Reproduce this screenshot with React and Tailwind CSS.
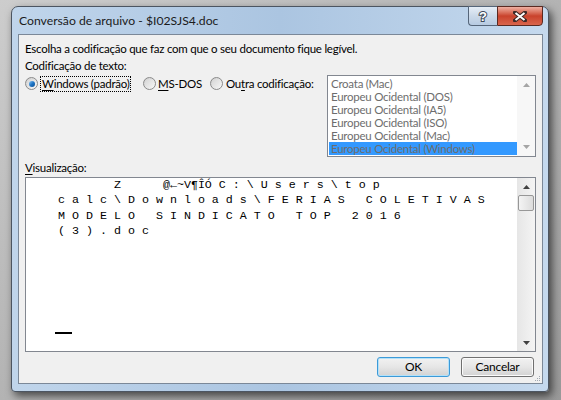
import React from 'react'

const ui = "[font-family:Lato,'Noto_Sans',sans-serif]"

function Radio({ on }) {
  return (
    <span className="flex h-[13px] w-[13px] shrink-0 items-center justify-center rounded-full border border-[#8a8a8a] bg-gradient-to-br from-[#cdcdcd] to-[#fbfbfb]">
      <span className="flex h-[9px] w-[9px] items-center justify-center rounded-full bg-gradient-to-br from-[#d6d6d6] to-[#f4f4f4]">
        {on ? (
          <span className="h-[6px] w-[6px] rounded-full bg-gradient-to-br from-[#7fc3f4] via-[#1d74c4] to-[#0d4f94]" />
        ) : null}
      </span>
    </span>
  )
}

function Arrow({ up, color }) {
  return (
    <svg width="7" height="4" viewBox="0 0 7 4">
      {up ? <path d="M3.5 0 L7 4 L0 4 Z" fill={color} /> : <path d="M0 0 L7 0 L3.5 4 Z" fill={color} />}
    </svg>
  )
}

function Button({ children, focus }) {
  return (
    <button
      className={
        'flex h-[20px] w-[73px] items-center justify-center rounded-[3px] border bg-gradient-to-b from-[#f2f2f2] via-[#e6e6e6] to-[#d2d2d2] text-[12px] leading-none text-black ' +
        (focus ? 'border-[#3c9ad8] shadow-[inset_0_0_0_1px_#b3e1f9]' : 'border-[#707070] shadow-[inset_0_0_0_1px_#fbfbfb]')
      }
    >
      {children}
    </button>
  )
}

const encodings = [
  'Croata (Mac)',
  'Europeu Ocidental (DOS)',
  'Europeu Ocidental (IA5)',
  'Europeu Ocidental (ISO)',
  'Europeu Ocidental (Mac)',
  'Europeu Ocidental (Windows)',
]

const preview = [
  '            Z      @←~V¶ÎÓ C : \\ U s e r s \\ t o p',
  '    c a l c \\ D o w n l o a d s \\ F E R I A S   C O L E T I V A S',
  '    M O D E L O   S I N D I C A T O   T O P   2 0 1 6',
  '    ( 3 ) . d o c',
]

export default function App() {
  return (
    <div className={`h-[400px] w-[561px] overflow-hidden bg-gradient-to-br from-[#cdcdcd] to-[#9a9a9a] pl-[11px] pt-[6px] ${ui}`}>
      <div className="relative flex h-[386px] w-[538px] flex-col rounded-t-[7px] rounded-b-[4px] border border-[#4c5561] bg-gradient-to-r from-[#c0d5eb] via-[#abc5e1] to-[#c5d9ee] shadow-[3px_4px_9px_rgba(0,0,0,0.6)]">
        <div className="flex h-[27px] items-center whitespace-nowrap pl-[7px] pt-[1px] text-[12.2px] text-[#1b1b1b]">
          Conversão de arquivo - $I02SJS4.doc
        </div>

        <div className="absolute right-[5px] top-[-1px] flex">
          <div className="flex h-[20px] w-[29px] items-center justify-center rounded-bl-[4px] border border-r-0 border-[#56667a] bg-gradient-to-b from-[#e6eef7] via-[#cbd9e9] to-[#b7cbe2]">
            <svg width="12" height="14" viewBox="0 0 12 14">
              <text x="6" y="12" textAnchor="middle" fontSize="13" fontWeight="bold" fontFamily="Liberation Sans, sans-serif" fill="#fff" stroke="#3f4b5a" strokeWidth="2" paintOrder="stroke">?</text>
            </svg>
          </div>
          <div className="flex h-[20px] w-[46px] items-center justify-center rounded-br-[4px] border border-[#5a2a22] bg-gradient-to-b from-[#eeb0a2] via-[#c9422c] to-[#d9654c]">
            <svg width="14" height="11" viewBox="0 0 14 11">
              <path d="M2 1.5 L12 9.5 M12 1.5 L2 9.5" stroke="#3d2a28" strokeWidth="4" strokeLinecap="square" />
              <path d="M2.5 2 L11.5 9 M11.5 2 L2.5 9" stroke="#fff" strokeWidth="2" />
            </svg>
          </div>
        </div>

        <div className="relative ml-[6px] flex h-[350px] w-[525px] flex-col whitespace-nowrap border border-[#7b8898] bg-[#f0f0f0] px-[6px] pt-[6px] text-[11.5px] leading-[15px] tracking-[-0.25px] text-black">
          <div>Escolha a codificação que faz com que o seu documento fique legível.</div>
          <div className="mt-[2px]">Codificação de texto:</div>

          <div className="mt-[2px] flex items-start">
            <div className="flex h-[17px] items-center">
              <div className="flex w-[118px] items-center">
                <Radio on />
                <span className="ml-[2px] border border-dotted border-black px-[1px] leading-[14px]">
                  <u className="decoration-1 underline-offset-2">W</u>indows (padrão)
                </span>
              </div>
              <div className="flex w-[67px] items-center">
                <Radio />
                <span className="ml-[2px]">
                  <u className="decoration-1 underline-offset-2">M</u>S-DOS
                </span>
              </div>
              <div className="flex items-center">
                <Radio />
                <span className="ml-[3px]">
                  Ou<u className="decoration-1 underline-offset-2">t</u>ra codificação:
                </span>
              </div>
            </div>

            <div className="ml-auto flex h-[82px] w-[209px] shrink-0 border border-[#828790] bg-white">
              <div className="flex-1 overflow-hidden pl-[1px] pt-[1px] text-[#6d6d6d]">
                {encodings.map((e, i) => (
                  <div
                    key={e}
                    className={'h-[13px] pl-[2px] leading-[13px] ' + (i === encodings.length - 1 ? 'bg-[#3399ff]' : '')}
                  >
                    {e}
                  </div>
                ))}
              </div>
              <div className="flex w-[18px] flex-col items-center justify-between bg-[#f7f7f7] py-[7px]">
                <Arrow up color="#a5a5a5" />
                <Arrow color="#a5a5a5" />
              </div>
            </div>
          </div>

          <div className="mt-[3px]">
            <u className="decoration-1 underline-offset-2">V</u>isualização:
          </div>

          <div className="mt-[2px] flex h-[175px] border border-[#828790] bg-white">
            <div className="flex-1 pl-[4px]">
              <pre className="whitespace-pre text-[11.67px] leading-[15.33px] tracking-normal text-black [font-family:'Liberation_Mono',monospace]">
                {preview.join('\n')}
              </pre>
              <div className="ml-[25px] mt-[93px] h-[2px] w-[17px] bg-black" />
            </div>
            <div className="flex w-[18px] flex-col items-center bg-gradient-to-r from-[#e6e6e6] to-[#f4f4f4]">
              <div className="flex h-[17px] items-center">
                <Arrow up color="#404040" />
              </div>
              <div className="h-[16px] w-[16px] rounded-[2px] border border-[#979797] bg-gradient-to-r from-[#f4f4f4] to-[#dcdcdc]" />
              <div className="flex-1" />
              <div className="flex h-[17px] items-center">
                <Arrow color="#404040" />
              </div>
            </div>
          </div>

          <div className="mr-[2px] mt-[5px] flex justify-end gap-[11px]">
            <Button focus>OK</Button>
            <Button>Cancelar</Button>
          </div>

          <svg className="absolute bottom-[1px] right-[1px]" width="8" height="8" viewBox="0 0 8 8">
            {[[6, 2], [6, 4], [4, 4], [6, 6], [4, 6], [2, 6]].map(([x, y]) => (
              <rect key={x + '-' + y} x={x} y={y} width="1" height="1" fill="#a0a8b2" />
            ))}
          </svg>
        </div>
      </div>
    </div>
  )
}
